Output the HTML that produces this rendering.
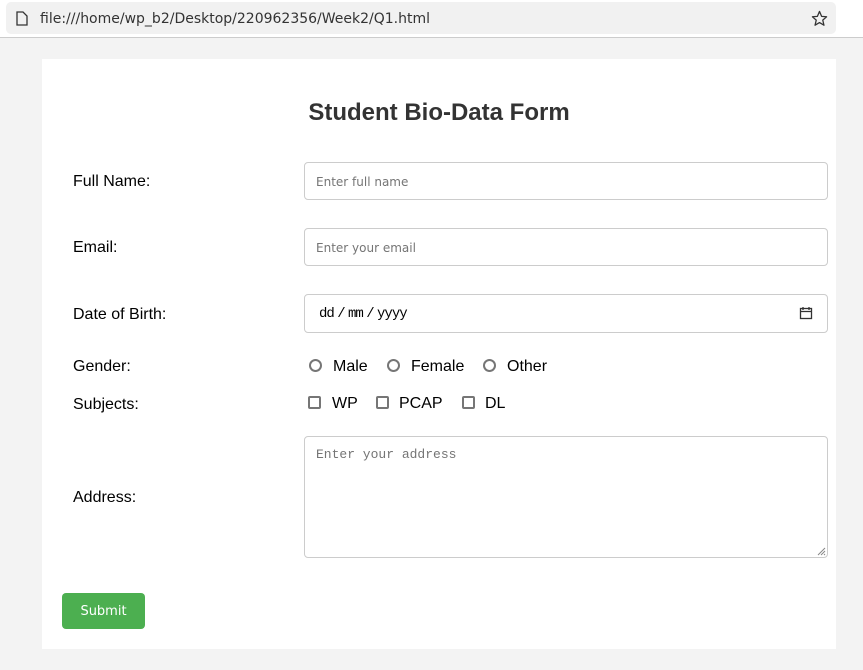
<!DOCTYPE html>
<html><head><meta charset="utf-8"><style>
*{box-sizing:border-box;margin:0;padding:0}
body{width:863px;height:670px;background:#f3f3f3;font-family:"Liberation Sans",sans-serif;position:relative;overflow:hidden;color:#000}
.bar{position:absolute;left:0;top:0;width:863px;height:38px;background:#fff;border-bottom:1px solid #ccc}
.url{position:absolute;left:6px;top:2px;width:830px;height:32px;background:#f1f1f1;border-radius:5px}
.url span{position:absolute;left:34px;top:9px;font-family:"DejaVu Sans",sans-serif;font-size:14px;color:#333}
.card{position:absolute;left:42px;top:59px;width:794px;height:590px;background:#fff}
h1{position:absolute;left:42px;width:794px;top:99px;text-align:center;font-size:24px;font-weight:bold;color:#333}
.lbl{position:absolute;left:73px;font-size:16px}
.inp{position:absolute;left:304px;width:524px;border:1px solid #ccc;border-radius:4px;background:#fff}
.ph{position:absolute;left:11px;font-size:12px;color:#757575;font-family:"DejaVu Sans",sans-serif}
.opt{position:absolute;font-size:16px}
.rad{position:absolute;width:13px;height:13px;border:2px solid #767676;border-radius:50%}
.chk{position:absolute;width:13px;height:13px;border:2px solid #767676;border-radius:2px}
.btn{position:absolute;left:62px;top:593px;width:83px;height:36px;background:#4caf50;border-radius:4px;color:#fff;font-size:13px;text-align:center;line-height:38px;font-family:"DejaVu Sans",sans-serif}
</style></head><body>
<div class="bar"><div class="url">
<svg style="position:absolute;left:10px;top:9px" width="12" height="15" viewBox="0 0 12 15"><path d="M1 1h6l4 4v9H1z" fill="none" stroke="#333" stroke-width="1.3"/></svg>
<span>file:///home/wp_b2/Desktop/220962356/Week2/Q1.html</span>
<svg style="position:absolute;left:805px;top:8px" width="17" height="17" viewBox="0 0 24 24"><path d="M12 2l3 7 7 .6-5.4 4.7 1.7 7.2L12 17.8 5.7 21.5l1.7-7.2L2 9.6 9 9z" fill="none" stroke="#333" stroke-width="1.8" stroke-linejoin="round"/></svg>
</div></div>
<div class="card"></div>
<h1>Student Bio-Data Form</h1>
<div class="lbl" style="top:173px">Full Name:</div>
<div class="inp" style="top:162px;height:38px"><span class="ph" style="top:12px">Enter full name</span></div>
<div class="lbl" style="top:239px">Email:</div>
<div class="inp" style="top:228px;height:38px"><span class="ph" style="top:12px">Enter your email</span></div>
<div class="lbl" style="top:306px">Date of Birth:</div>
<div class="inp" style="top:294px;height:39px"><span style="position:absolute;left:14px;top:11px;font-family:'Liberation Mono',monospace;font-size:14px;letter-spacing:-1px;word-spacing:-4px">dd / mm / yyyy</span>
<svg style="position:absolute;left:494px;top:11px" width="14" height="14" viewBox="0 0 14 14"><rect x="1.5" y="2.5" width="11" height="10" fill="none" stroke="#333" stroke-width="1.3"/><path d="M1.5 5.5h11M4 1v3M10 1v3" stroke="#333" stroke-width="1.3"/></svg></div>
<div class="lbl" style="top:358px">Gender:</div>
<div class="rad" style="left:309px;top:359px"></div><div class="opt" style="left:333px;top:358px">Male</div>
<div class="rad" style="left:387px;top:359px"></div><div class="opt" style="left:411px;top:358px">Female</div>
<div class="rad" style="left:483px;top:359px"></div><div class="opt" style="left:507px;top:358px">Other</div>
<div class="lbl" style="top:396px">Subjects:</div>
<div class="chk" style="left:308px;top:396px"></div><div class="opt" style="left:332px;top:395px">WP</div>
<div class="chk" style="left:376px;top:396px"></div><div class="opt" style="left:399px;top:395px">PCAP</div>
<div class="chk" style="left:462px;top:396px"></div><div class="opt" style="left:485px;top:395px">DL</div>
<div class="lbl" style="top:489px">Address:</div>
<div class="inp" style="top:436px;height:122px"><span style="position:absolute;left:11px;top:10px;font-family:'Liberation Mono',monospace;font-size:13px;color:#757575">Enter your address</span>
<svg style="position:absolute;right:1px;bottom:1px" width="10" height="10" viewBox="0 0 10 10"><path d="M9 2L2 9M9 5L5 9M9 8L8 9" stroke="#888" stroke-width="1"/></svg></div>
<div class="btn">Submit</div>
</body></html>
